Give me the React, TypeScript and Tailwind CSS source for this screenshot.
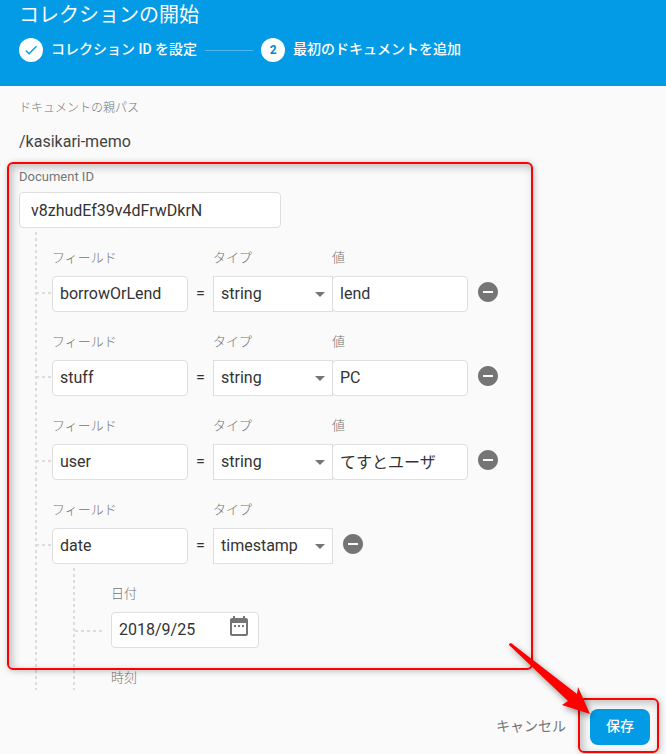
import { useId, useState } from "react";
import type { ReactNode } from "react";

const inputStyle =
  "h-9 rounded border border-[#dedede] bg-white px-[7px] pb-0.5 text-base text-[#333] outline-none";
const labelStyle = "text-[13px] leading-5 text-[#757575]";

const verticalDash =
  "w-[2px] bg-[repeating-linear-gradient(to_bottom,#dcdcdc_0px,#dcdcdc_3px,transparent_3px,transparent_6px)]";
const horizontalDash =
  "h-[2px] bg-[repeating-linear-gradient(to_right,#dcdcdc_0px,#dcdcdc_3px,transparent_3px,transparent_6px)]";

type FieldType = "string" | "timestamp";

interface Field {
  name: string;
  type: FieldType;
  value?: string;
}

const fields: Field[] = [
  { name: "borrowOrLend", type: "string", value: "lend" },
  { name: "stuff", type: "string", value: "PC" },
  { name: "user", type: "string", value: "てすとユーザ" },
  { name: "date", type: "timestamp" },
];

function Step({ badge, children }: { badge: ReactNode; children: ReactNode }) {
  return (
    <li className="flex items-center gap-2">
      <span className="flex size-6 items-center justify-center rounded-full bg-white text-xs font-bold text-[#0288d1]">
        {badge}
      </span>
      <span className="pb-0.5 text-sm font-medium">{children}</span>
    </li>
  );
}

function Header() {
  return (
    <header className="bg-[#039be5] px-[19px] pb-6 text-white">
      <h1 className="py-px text-xl leading-7">コレクションの開始</h1>
      <ol className="mt-2 flex items-center gap-2">
        <Step
          badge={
            <svg viewBox="0 0 24 24" className="size-4" fill="#039be5" aria-hidden="true">
              <path d="M9 16.17 4.83 12l-1.42 1.41L9 19 21 7l-1.41-1.41z" />
            </svg>
          }
        >
          コレクション ID を設定
        </Step>
        <li aria-hidden="true" className="h-px w-12 bg-white/30" />
        <Step badge="2">最初のドキュメントを追加</Step>
      </ol>
    </header>
  );
}

function FieldRow({ field }: { field: Field }) {
  const id = useId();
  const [type, setType] = useState<FieldType>(field.type);
  return (
    <div className="flex h-[84px] items-end">
      <div className={`mb-[18px] w-4 shrink-0 ${horizontalDash}`} />
      <div className="flex w-[136px] flex-col gap-2">
        <label htmlFor={`${id}-name`} className={`font-light ${labelStyle}`}>
          フィールド
        </label>
        <input id={`${id}-name`} defaultValue={field.name} className={`w-full ${inputStyle}`} />
      </div>
      <span className="w-[25px] text-center text-base leading-9 text-[#333]">=</span>
      <div className="flex w-[120px] flex-col gap-2">
        <label htmlFor={`${id}-type`} className={`font-light ${labelStyle}`}>
          タイプ
        </label>
        <div className="relative">
          <select
            id={`${id}-type`}
            value={type}
            onChange={(e) => setType(e.target.value as FieldType)}
            className="h-9 w-full appearance-none border border-[#dedede] bg-white px-[7px] text-base text-[#333] outline-none"
          >
            <option value="string">string</option>
            <option value="timestamp">timestamp</option>
          </select>
          <svg
            viewBox="0 0 10 5"
            className="pointer-events-none absolute top-4 right-2 h-[5px] w-[10px]"
            fill="#757575"
            aria-hidden="true"
          >
            <path d="M0 0h10L5 5z" />
          </svg>
        </div>
      </div>
      {field.value !== undefined && (
        <div className="-ml-px flex w-[136px] flex-col gap-2">
          <label htmlFor={`${id}-value`} className={`font-light ${labelStyle}`}>
            値
          </label>
          <input id={`${id}-value`} defaultValue={field.value} className={`w-full ${inputStyle}`} />
        </div>
      )}
      <button type="button" aria-label="削除" className="mb-2 ml-2">
        <svg viewBox="0 0 24 24" className="size-6" fill="#757575" aria-hidden="true">
          <path d="M12 2C6.48 2 2 6.48 2 12s4.48 10 10 10 10-4.48 10-10S17.52 2 12 2zm5 11H7v-2h10v2z" />
        </svg>
      </button>
    </div>
  );
}

function TimestampEditor() {
  return (
    <div className="ml-[37px] flex pt-1">
      <div className={`shrink-0 ${verticalDash}`} />
      <div>
        <div className="flex h-20 items-end">
          <div className={`mr-2 mb-4 w-7 shrink-0 ${horizontalDash}`} />
          <div className="flex w-[148px] flex-col gap-2">
            <label htmlFor="date" className={`font-light ${labelStyle}`}>
              日付
            </label>
            <div className="flex h-9 rounded border border-[#dedede] bg-white px-[7px]">
              <input
                id="date"
                defaultValue="2018/9/25"
                className="min-w-0 flex-1 text-base text-[#333] outline-none"
              />
              <button type="button" aria-label="カレンダーを開く" className="mt-px self-start">
                <svg viewBox="0 0 24 24" className="size-6" fill="#757575" aria-hidden="true">
                  <path d="M9 11H7v2h2v-2zm4 0h-2v2h2v-2zm4 0h-2v2h2v-2zm2-7h-1V2h-2v2H8V2H6v2H5c-1.11 0-1.99.9-1.99 2L3 20c0 1.1.89 2 2 2h14c1.1 0 2-.9 2-2V6c0-1.1-.9-2-2-2zm0 16H5V9h14v11z" />
                </svg>
              </button>
            </div>
          </div>
        </div>
        <div className="flex h-[42px] items-end pb-0.5 pl-9">
          <span className={`font-light ${labelStyle}`}>時刻</span>
        </div>
      </div>
    </div>
  );
}

function Annotations() {
  const frame =
    "absolute rounded-md border-2 border-[#ff0000] shadow-[1px_1px_6px_rgba(0,0,0,0.25),inset_3px_3px_8px_rgba(0,0,0,0.25)]";
  return (
    <div className="pointer-events-none absolute inset-0" aria-hidden="true">
      <div className={`top-[162px] left-[7px] h-[508px] w-[526px] ${frame}`} />
      <div className={`top-[698px] left-[578px] h-[55px] w-[81px] ${frame}`} />
      <svg
        viewBox="0 0 90 80"
        className="absolute top-[640px] left-[506px] h-20 w-[90px] overflow-visible drop-shadow-[2px_3px_3px_rgba(0,0,0,0.4)]"
      >
        <path d="M3 4 5 3 71 54 72 47 84 74 56 65 62 61 3 5z" fill="#ff0000" />
      </svg>
    </div>
  );
}

export default function App() {
  return (
    <div className="relative overflow-hidden bg-[#fafafa] font-[Roboto,'Noto_Sans_CJK_JP',sans-serif]">
      <Header />
      <main className="px-[19px] pt-3">
        <p className="text-xs leading-5 font-light text-[#757575]">ドキュメントの親パス</p>
        <p className="mt-3 text-base leading-6 text-[#424242]">/kasikari-memo</p>
        <div className="mt-3 flex flex-col">
          <label htmlFor="document-id" className={`pt-px ${labelStyle}`}>
            Document ID
          </label>
          <input
            id="document-id"
            defaultValue="v8zhudEf39v4dFrwDkrN"
            className="mt-[5px] h-9 w-[262px] rounded border border-[#dedede] bg-white px-[11px] text-base text-[#333] outline-none"
          />
        </div>
        <div className="flex pl-4">
          <div className={`mt-1 shrink-0 ${verticalDash}`} />
          <div className="-ml-px">
            {fields.map((field) => (
              <FieldRow key={field.name} field={field} />
            ))}
            <TimestampEditor />
          </div>
        </div>
      </main>
      <footer className="flex items-center justify-end gap-6 px-4 pt-[19px] pb-[9px]">
        <button type="button" className="pb-0.5 text-sm text-[#757575]">
          キャンセル
        </button>
        <button
          type="button"
          className="h-9 w-[60px] rounded-lg bg-[#039be5] pb-0.5 text-sm font-medium text-white"
        >
          保存
        </button>
      </footer>
      <Annotations />
    </div>
  );
}
